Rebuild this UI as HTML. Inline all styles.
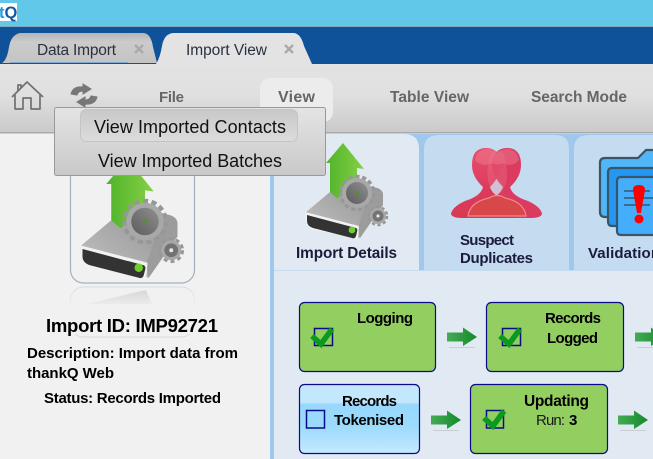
<!DOCTYPE html>
<html><head><meta charset="utf-8"><style>
html,body{margin:0;padding:0;background:#f1f1f1}
svg{display:block}
text{font-family:"Liberation Sans",sans-serif}
.b{font-weight:bold}
</style></head><body>
<svg width="653" height="459" viewBox="0 0 653 459" xmlns="http://www.w3.org/2000/svg" style="width:653px;height:459px;overflow:hidden">
<defs>
<linearGradient id="tb" x1="0" y1="0" x2="0" y2="1"><stop offset="0" stop-color="#e3e3e3"/><stop offset=".45" stop-color="#e0e0e0"/><stop offset="1" stop-color="#cacaca"/></linearGradient>
<linearGradient id="menu" x1="0" y1="0" x2="0" y2="1"><stop offset="0" stop-color="#e4e4e4"/><stop offset="1" stop-color="#c9c9c9"/></linearGradient>
<linearGradient id="hl" x1="0" y1="0" x2="0" y2="1"><stop offset="0" stop-color="#c8c8c8"/><stop offset="1" stop-color="#dcdcdc"/></linearGradient>
<linearGradient id="tg" x1="0" y1="0" x2="0" y2="1"><stop offset="0" stop-color="#b5b5b5"/><stop offset=".3" stop-color="#cbcbcb"/><stop offset="1" stop-color="#c4c4c4"/></linearGradient>
<linearGradient id="sky" x1="0" y1="0" x2="0" y2="1"><stop offset="0" stop-color="#c3e7fd"/><stop offset=".26" stop-color="#c3e7fd"/><stop offset=".29" stop-color="#97d8fc"/><stop offset=".6" stop-color="#9bdafc"/><stop offset="1" stop-color="#c5e9fe"/></linearGradient>
<linearGradient id="ag" x1="0" y1="0" x2="1" y2="0"><stop offset="0" stop-color="#4fb32a"/><stop offset="1" stop-color="#85d045"/></linearGradient>
<linearGradient id="top" x1="0" y1="1" x2="1" y2="0"><stop offset="0" stop-color="#c4c4c4"/><stop offset=".6" stop-color="#a2a2a2"/><stop offset="1" stop-color="#b5b5b5"/></linearGradient>
<linearGradient id="gf" x1="0" y1="1" x2="1" y2="0"><stop offset="0" stop-color="#5c5c5c"/><stop offset="1" stop-color="#8f8f8f"/></linearGradient>
<linearGradient id="arr" x1="0" y1="0" x2="1" y2="0"><stop offset="0" stop-color="#45ab55"/><stop offset="1" stop-color="#138a2c"/></linearGradient>
<linearGradient id="red" x1="0" y1="0" x2="0" y2="1"><stop offset="0" stop-color="#e8506e"/><stop offset=".6" stop-color="#dc3a5c"/><stop offset="1" stop-color="#d83a52"/></linearGradient>
<linearGradient id="fade" x1="0" y1="0" x2="0" y2="1"><stop offset="0" stop-color="#f1f1f1" stop-opacity="0"/><stop offset="1" stop-color="#f1f1f1"/></linearGradient>

<g id="drive">
  <path d="M38 0L59 26L52 25V34L33 56L25 50V20H21Z" fill="url(#ag)"/>
  <path d="M0 70L25 49L33 56L52 34L67 44Q78 45 78 52V60L55 95L6 84Q0 80 0 70Z" fill="url(#top)"/>
  <path d="M67 44Q78 45 78 52V62L55 95L53 84Z" fill="#9c9c9c"/>
  <path d="M0 69L54 83L53 96L6 86Q0 82 0 69Z" fill="#f2f2f2"/>
  <path d="M2 72L51 85Q53 86 52 89L51 93Q50 96 47 95L8 85Q2 83 2 78Z" fill="#333"/>
  <circle cx="47" cy="87" r="3.400" fill="#6fce2c"/>
  <circle cx="52" cy="50" r="16" fill="none" stroke="#979797" stroke-width="4.500" stroke-dasharray="4 2.700"/>
  <circle cx="52" cy="50" r="15" fill="#a8a8a8"/>
  <circle cx="52" cy="50" r="11" fill="url(#gf)"/>
  <circle cx="52" cy="50" r="2" fill="#5a8a3a"/>
  <circle cx="73" cy="73" r="8.500" fill="none" stroke="#979797" stroke-width="3.500" stroke-dasharray="3 2.400"/>
  <circle cx="73" cy="73" r="8" fill="#a8a8a8"/>
  <circle cx="73" cy="73" r="5.500" fill="#737373"/>
  <circle cx="73" cy="73" r="1.600" fill="#e8e8e8"/>
</g>
<g id="ck"><path d="M1 7L10 15L21 0" fill="none" stroke="#0a9a1e" stroke-width="5.500"/></g>
<g id="arw"><path d="M0 -4.500H16V-9.500L30 0L16 9V4.500H0Z" fill="url(#arr)"/><rect x="2" y="10" width="26" height="1" fill="#c9ced3"/></g>
<g id="pers"><path d="M451 214Q452 207 465 201Q481 196 483 187Q472 177 472 165Q472 148 486 148Q500 148 501 165Q500 177 490 187Q493 196 507 201Q520 207 521 214Q520 218 510 218H463Q452 218 451 214Z"/></g>
</defs>

<rect width="653" height="459" fill="#f1f1f1"/>
<!-- top bar -->
<rect width="653" height="26" fill="#62c8ea"/>
<rect y="26" width="653" height="1" fill="#7fa8c0"/>
<rect x="0" y="3" width="17" height="18" fill="#fff"/>
<text x="-1" y="18" class="b" font-size="16.500" fill="#1a9fe0">t<tspan fill="#14599f">Q</tspan></text>
<!-- blue band -->
<rect y="27" width="653" height="37" fill="#10529a"/>
<path d="M2 63Q7 60 9 47Q11 35 20 33H144Q151 34 153 47L157 63Z" fill="url(#tg)"/>
<rect x="10" y="62" width="118" height="1" fill="#7fa8d0"/>
<path d="M156 64Q160 58 162 46Q164 34 173 33H294Q301 34 304 46L312 64Z" fill="#e3e3e3"/>
<text x="37" y="55" font-size="15.500" fill="#2a3040" textLength="79">Data Import</text>
<text x="186" y="55" font-size="15.500" fill="#2a3040" textLength="81">Import View</text>
<path d="M135 45L143 53M143 45L135 53" stroke="#a9a9a9" stroke-width="2.400"/>
<path d="M285 45L293 53M293 45L285 53" stroke="#a9a9a9" stroke-width="2.400"/>
<!-- toolbar -->
<rect y="64" width="653" height="68" fill="url(#tb)"/>
<rect y="132" width="653" height="1.500" fill="#a9a9a9"/>
<rect x="260" y="78" width="73" height="44" rx="10" fill="#ececec"/>
<path d="M12 97L27 82L43 97M18 91V85H21V88M15 95V109H23V98H31V109H40V95" fill="none" stroke="#707070" stroke-width="1.700" stroke-linejoin="round"/>
<path d="M71 94Q73 86 83 87V84L91 89L83 94V91Q78 91 77 95Z" fill="#777" stroke="#777" stroke-width="1"/>
<path d="M97 97Q95 105 85 104V107L77 102L85 97V100Q90 100 91 96Z" fill="#777" stroke="#777" stroke-width="1"/>
<text x="159" y="102" class="b" font-size="15" fill="#666" textLength="25">File</text>
<text x="278" y="102" class="b" font-size="16" fill="#666" textLength="37">View</text>
<text x="390" y="102" class="b" font-size="15.500" fill="#666" textLength="79">Table View</text>
<text x="531" y="102" class="b" font-size="15.500" fill="#666" textLength="96">Search Mode</text>
<!-- left panel -->
<rect x="270" y="133" width="4" height="326" fill="#a0c8ec"/>
<rect x="70.500" y="150" width="124" height="133" rx="13" fill="none" stroke="#a2afc0" stroke-width="1.200"/>
<use href="#drive" transform="translate(80 159) scale(1.25)"/>
<g opacity=".4"><rect x="70.500" y="287" width="124" height="50" rx="13" fill="none" stroke="#b5bdc8" stroke-width="1"/><path d="M86 304L146 290L152 304Z" fill="#aaa"/></g>
<rect x="60" y="288" width="145" height="20" fill="url(#fade)"/>
<rect x="60" y="304" width="145" height="30" fill="#f1f1f1"/>
<text x="46" y="332" class="b" font-size="18.500" fill="#000" textLength="172">Import ID: IMP92721</text>
<text x="27" y="358" class="b" font-size="15" fill="#000" textLength="211">Description: Import data from</text>
<text x="27" y="378" class="b" font-size="15" fill="#000" textLength="87">thankQ Web</text>
<text x="44" y="403" class="b" font-size="15" fill="#000" textLength="177">Status: Records Imported</text>
<!-- right area -->
<rect x="274" y="134" width="379" height="137" fill="#a0c8ec"/>
<rect x="274" y="271" width="379" height="188" fill="#e1e9f2"/>
<path d="M274 271V134H404Q419 134 419 149V271Z" fill="#e1e9f2"/>
<path d="M424 271V149Q424 135 439 135H555Q569 135 569 149V271Z" fill="#c5dbf0"/>
<path d="M574 271V149Q574 135 589 135H653V271Z" fill="#c5dbf0"/>
<rect x="274" y="270" width="379" height="1" fill="#c5dbf0"/>
<use href="#drive" transform="translate(305 143)"/>
<text x="296" y="258" class="b" font-size="15.300" fill="#1b1b3c" textLength="101">Import Details</text>
<!-- persons -->
<use href="#pers" fill="url(#red)"/>
<use href="#pers" transform="translate(993 0) scale(-1 1)" fill="#dc3359" opacity=".95"/>
<path d="M475 160Q482 168 492 163Q497 166 503 163Q512 168 519 160Q517 150 508 149Q501 149 497 153Q493 149 486 149Q477 150 475 160Z" fill="#f08a99" opacity=".4"/>
<path d="M491 153Q485 172 489 184Q494 194 497 195Q502 193 506 183Q509 170 503 153Q497 148 491 153Z" fill="#ee7f93" opacity=".3"/>
<path d="M468 216Q470 202 489 198Q497 193 505 198Q524 202 526 216Z" fill="#d8474a" stroke="#ef8a8a" stroke-width="1.200"/>
<text x="460" y="245" class="b" font-size="15" fill="#1b1b3c" textLength="54">Suspect</text>
<text x="460" y="263" class="b" font-size="15" fill="#1b1b3c" textLength="73">Duplicates</text>
<!-- folders -->
<path d="M600 163Q600 158 605 158H638L646 150H655V217H605Q600 217 600 212Z" fill="#51b6f8" stroke="#3a5468" stroke-width="2.200"/>
<path d="M608 172Q608 168 612 168H655V226H612Q608 226 608 221Z" fill="#2397f2" stroke="#3a5468" stroke-width="2.200"/>
<path d="M617 181Q617 177 621 177H655V235H621Q617 235 617 231Z" fill="#44aefc" stroke="#3a5468" stroke-width="2.200"/>
<path d="M624 191H650M624 198H653M624 205H650" stroke="#34566e" stroke-width="1.500"/>
<path d="M633 190Q633 185 639 185Q645 185 645 190L641 213H637Z" fill="#f00"/>
<circle cx="639" cy="219" r="4.500" fill="#f00"/>
<text x="588" y="258" class="b" font-size="15" fill="#1b1b3c" textLength="72">Validation</text>
<!-- cards -->
<g stroke="#0b0b8a" stroke-width="1.200">
<rect x="299.500" y="302.500" width="136" height="69" rx="5" fill="#92ce60"/>
<rect x="486.500" y="302.500" width="137" height="69" rx="5" fill="#92ce60"/>
<rect x="299.500" y="384.500" width="120" height="69" rx="5" fill="url(#sky)"/>
<rect x="470.500" y="384.500" width="137" height="69" rx="5" fill="#92ce60"/>
</g>
<g fill="none" stroke="#0b0b8a" stroke-width="1.500">
<rect x="314.500" y="328.500" width="18" height="17"/>
<rect x="502.500" y="328.500" width="18" height="17"/>
<rect x="306.500" y="410.500" width="18" height="17.500"/>
<rect x="486.500" y="410.500" width="17" height="17.500"/>
</g>
<use href="#ck" transform="translate(311 329)"/>
<use href="#ck" transform="translate(499 329)"/>
<use href="#ck" transform="translate(483 411)"/>
<text x="357" y="323" class="b" font-size="15" fill="#000" textLength="56">Logging</text>
<text x="545" y="323" class="b" font-size="15" fill="#000" textLength="56">Records</text>
<text x="547" y="343" class="b" font-size="15" fill="#000" textLength="51">Logged</text>
<text x="342" y="406" class="b" font-size="15" fill="#000" textLength="55">Records</text>
<text x="334" y="425" class="b" font-size="15" fill="#000" textLength="70">Tokenised</text>
<text x="524" y="406" class="b" font-size="15.500" fill="#000" textLength="65">Updating</text>
<text x="536" y="425" font-size="15" fill="#1a1a1a" textLength="29">Run:</text>
<text x="569" y="425" class="b" font-size="15" fill="#000">3</text>
<use href="#arw" transform="translate(447 337)"/>
<use href="#arw" transform="translate(635 337)"/>
<use href="#arw" transform="translate(431 420)"/>
<use href="#arw" transform="translate(618 420)"/>
<!-- dropdown -->
<rect x="54.500" y="107.500" width="271" height="68" rx="2" fill="url(#menu)" stroke="#999"/>
<rect x="80.500" y="109.500" width="217" height="32" rx="6" fill="url(#hl)" stroke="#c4c4c4"/>
<text x="94" y="133" font-size="18" fill="#111" textLength="192">View Imported Contacts</text>
<text x="98" y="167" font-size="18" fill="#111" textLength="184">View Imported Batches</text>
</svg>
</body></html>
